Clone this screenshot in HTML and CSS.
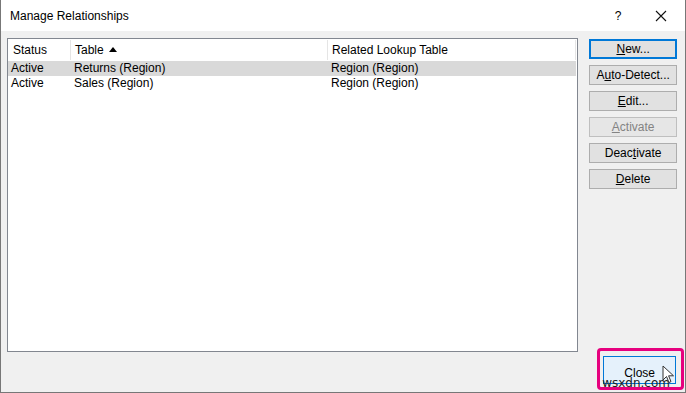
FILE: index.html
```html
<!DOCTYPE html>
<html>
<head>
<meta charset="utf-8">
<link rel="stylesheet" href="styles.css">
</head>
<body>
<div class="dialog">
  <div class="titlebar">
    <span class="title">Manage Relationships</span>
    <span class="help">?</span>
    <span class="closex">
      <svg width="12" height="12" viewBox="0 0 12 12"><path d="M1 1L11 11M11 1L1 11" stroke="#111" stroke-width="1.1" fill="none"/></svg>
    </span>
  </div>
  <div class="body">
    <div class="list">
      <div class="row head">
        <div class="c1 hc">Status</div>
        <div class="c2 hc">Table <span class="arrow"></span></div>
        <div class="c3 hc">Related Lookup Table</div>
      </div>
      <div class="row sel">
        <div class="c1">Active</div>
        <div class="c2">Returns (Region)</div>
        <div class="c3">Region (Region)</div>
      </div>
      <div class="row">
        <div class="c1">Active</div>
        <div class="c2">Sales (Region)</div>
        <div class="c3">Region (Region)</div>
      </div>
    </div>
    <div class="side">
      <div class="btn default"><u>N</u>ew...</div>
      <div class="btn">A<u>u</u>to-Detect...</div>
      <div class="btn"><u>E</u>dit...</div>
      <div class="btn disabled"><u>A</u>ctivate</div>
      <div class="btn">Deac<u>t</u>ivate</div>
      <div class="btn"><u>D</u>elete</div>
      <div class="spacer"></div>
      <div class="hilite">
        <div class="btn closebtn">Close</div>
        <span class="watermark">wsxdn.com</span>
        <svg class="cursor" width="13" height="19" viewBox="0 0 13 19"><path d="M1 1L1 15L4.5 11.5L7 17.5L9 16.6L6.6 10.8L11.5 10.8Z" fill="#fff" stroke="#333" stroke-width="1"/></svg>
      </div>
    </div>
  </div>
</div>
</body>
</html>
```

FILE: styles.css
```css
* { box-sizing: border-box; }
html, body { margin: 0; padding: 0; }
body {
  width: 686px;
  height: 393px;
  font-family: "Liberation Sans", Arial, sans-serif;
  font-size: 12px;
  color: #000;
  overflow: hidden;
}
.dialog {
  width: 686px;
  height: 393px;
  border: 1px solid #777;
  border-top: none;
  display: flex;
  flex-direction: column;
  background: #f0f0f0;
}
.titlebar {
  height: 31px;
  background: #fff;
  display: flex;
  align-items: center;
  padding-left: 9px;
  flex-shrink: 0;
}
.title { font-size: 12px; flex: 1; padding-top: 1px; }
.help { width: 14px; text-align: center; margin-right: 30px; font-size: 12px; }
.closex { width: 12px; height: 12px; margin-right: 18px; display: flex; }
.body {
  flex: 1;
  display: flex;
  padding: 7px 0 0 6px;
}
.list {
  width: 572px;
  height: 314px;
  border: 1px solid #828790;
  background: #fff;
  padding-top: 1px;
}
.row {
  display: flex;
  height: 15px;
  line-height: 15px;
  padding-left: 3px;
  margin-right: 1px;
}
.row.head {
  height: 20px;
  line-height: 20px;
  margin-bottom: 1px;
  padding-left: 0;
}
.row.sel { background: #d9d9d9; }
.c1 { width: 63px; }
.c2 { width: 257px; }
.c3 { flex: 1; }
.hc { border-right: 1px solid #e5e5e5; padding-left: 5px; }
.head .c1 { width: 63px; }
.head .c2 { width: 257px; padding-left: 4px; }
.head .c3 { border-right: 1px solid #e5e5e5; flex: 0 0 248px; padding-left: 4px; }
.arrow {
  display: inline-block;
  width: 0; height: 0;
  border-left: 4px solid transparent;
  border-right: 4px solid transparent;
  border-bottom: 5px solid #000;
  vertical-align: 2px;
  margin-left: 2px;
}
.side {
  width: 96px;
  margin-left: 11px;
  margin-top: 1px;
  display: flex;
  flex-direction: column;
  gap: 6px;
}
.btn {
  width: 88px;
  height: 20px;
  border: 1px solid #adadad;
  background: #e1e1e1;
  text-align: center;
  line-height: 18px;
  font-size: 12px;
}
.btn.default { border: 2px solid #0078d7; line-height: 16px; }
.btn.disabled { color: #838383; border-color: #bfbfbf; background: #e6e6e6; }
.spacer { flex: 1; }
.hilite {
  position: relative;
  margin-left: 8px;
  width: 87px;
  height: 42px;
  border: 3px solid #e6007e;
  border-radius: 4px;
  padding: 5px 0 0 3px;
  margin-bottom: 2px;
}
.btn.closebtn {
  width: 73px;
  height: 28px;
  background: #e5f1fb;
  border-color: #0078d7;
  padding-top: 6px;
  line-height: 20px;
}
.watermark {
  position: absolute;
  left: 2px;
  top: 25px;
  font-family: "DejaVu Sans", sans-serif;
  font-size: 12px;
  color: #222;
}
.cursor {
  position: absolute;
  left: 62px;
  top: 14px;
}
```
